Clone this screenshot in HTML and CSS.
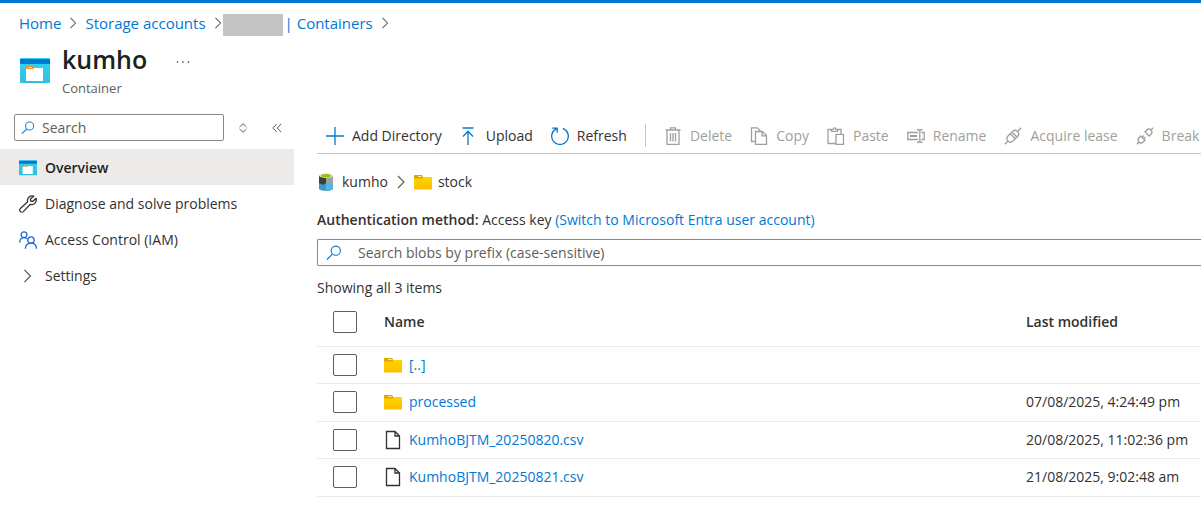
FILE: index.html
```
<!DOCTYPE html>
<html lang="en">
<head>
  <meta charset="UTF-8" />
  <meta name="viewport" content="width=device-width, initial-scale=1" />
  <title>kumho - Container</title>
  <link rel="stylesheet" href="styles.css">
</head>
<body>
  <!-- shared icons -->
  <svg class="defs" aria-hidden="true">
    <linearGradient id="gContainer" x1="0" y1="0" x2="0" y2="1">
      <stop offset="0" stop-color="#32d4f5" /><stop offset="1" stop-color="#32bedd" />
    </linearGradient>
    <linearGradient id="gFolder" x1="0" y1="0" x2="0" y2="1">
      <stop offset="0" stop-color="#ffd400" /><stop offset="1" stop-color="#ffbd00" />
    </linearGradient>
    <symbol id="container" viewBox="0 0 30 26">
      <rect width="30" height="25" rx="1" fill="url(#gContainer)" />
      <path d="M0 6V2a1 1 0 0 1 1-1h28a1 1 0 0 1 1 1v4z" fill="#0078d4" />
      <path d="M6 10h17v13H6z" fill="#fff" />
      <rect x="6" y="8" width="8" height="3" rx="1" fill="#f78d1e" />
      <path d="M8.500 9.500h3.500" stroke="#ffd9a8" />
    </symbol>
    <symbol id="folder" viewBox="0 0 18 16">
      <path d="M0 1.500Q0 1 .5 1H8l1 1.500V5H0z" fill="#dfa500" />
      <path d="M4 2.500h3.500" stroke="#ffe9a6" />
      <path d="M0 4.500h8.500L9.500 3H18v12.500H0z" fill="url(#gFolder)" />
    </symbol>
    <symbol id="file" viewBox="0 0 18 20">
      <path d="M2.500 1.500h8.500l4.500 4.500v12.500h-13zM11 1.500V6h4.500" fill="none" stroke="#323130" stroke-width="1.300" />
    </symbol>
    <symbol id="search" viewBox="0 0 16 16">
      <path d="M1 14.500 6.300 9.200" fill="none" stroke="#0078d4" stroke-width="1.200" />
      <circle cx="9.800" cy="5.700" r="4.600" fill="none" stroke="#0078d4" stroke-width="1.100" />
    </symbol>
    <symbol id="chevron" viewBox="0 0 8 14">
      <path d="M1 1l6 6-6 6" fill="none" stroke="currentColor" stroke-width="1.200" />
    </symbol>
  </svg>

  <header class="page-header">
    <nav class="crumbs" aria-label="Breadcrumb">
      <a href="#">Home</a>
      <svg class="chev"><use href="#chevron" /></svg>
      <a href="#">Storage accounts</a>
      <svg class="chev"><use href="#chevron" /></svg>
      <span class="redacted"></span>
      <a href="#" class="last">| Containers</a>
      <svg class="chev"><use href="#chevron" /></svg>
    </nav>
    <div class="title">
      <svg class="title-icon"><use href="#container" /></svg>
      <div>
        <div class="title-line">
          <h1>kumho</h1>
          <button type="button" class="more" aria-label="More">
            <svg width="14" height="4" viewBox="0 0 14 4" fill="#323130"><circle cx="1.500" cy="2" r=".8" /><circle cx="7" cy="2" r=".8" /><circle cx="12.500" cy="2" r=".8" /></svg>
          </button>
        </div>
        <p>Container</p>
      </div>
    </div>
  </header>

  <div class="layout">
    <aside class="sidebar">
      <div class="side-tools">
        <label class="box side-search">
          <svg width="14" height="14"><use href="#search" /></svg>
          <input type="text" placeholder="Search" aria-label="Search menu" />
        </label>
        <button type="button" aria-label="Expand all">
          <svg width="8" height="10" viewBox="0 0 8 10"><path d="M.5 4 4 .7 7.500 4M.5 6 4 9.300 7.500 6" fill="none" stroke="#605e5c" /></svg>
        </button>
        <button type="button" aria-label="Collapse menu">
          <svg width="10" height="10" viewBox="0 0 10 10"><path d="M4.800.8.800 5l4 4.200M9.200.8 5.200 5l4 4.200" fill="none" stroke="#605e5c" /></svg>
        </button>
      </div>
      <nav class="menu">
        <a href="#" class="active"><svg><use href="#container" /></svg>Overview</a>
        <a href="#">
          <svg viewBox="0 0 18 18" fill="none" stroke="#323130" stroke-width="1.300"><path d="M14.800 1.200a4.600 4.600 0 0 0-6.100 5.600L1.300 13.600a2 2 0 0 0 3 3l7-7.300a4.600 4.600 0 0 0 5.700-6l-3 3-2.300-.3-.3-2.100z" stroke-linejoin="round" /></svg>
          Diagnose and solve problems
        </a>
        <a href="#">
          <svg viewBox="0 0 18 18" fill="none" stroke="#1a66d6" stroke-width="1.300"><circle cx="5" cy="3.700" r="2.900" /><path d="M.7 11.500c0-3 1.800-4.900 4.300-4.900 1.300 0 2.300.4 3.100 1.100" /><circle cx="12" cy="9" r="3.200" /><path d="M6.300 17.800c.2-3.500 2.500-5.600 5.700-5.600s5.300 2.100 5.500 5.600" /></svg>
          Access Control (IAM)
        </a>
        <a href="#"><svg class="menu-chev" viewBox="0 0 18 18" fill="none" stroke="#605e5c" stroke-width="1.200"><path d="M5.500 3l6 6-6 6" /></svg>Settings</a>
      </nav>
    </aside>

    <main>
      <div class="toolbar">
        <button type="button"><svg class="blue" viewBox="0 0 18 18"><path d="M9 0v18M0 9h18" /></svg>Add Directory</button>
        <button type="button"><svg class="blue" viewBox="0 0 18 18"><path d="M2.500 1h11M8 18V4M3 9.500l5-5.200 5 5.200" /></svg>Upload</button>
        <button type="button"><svg class="blue" viewBox="0 0 18 18"><path d="M6.200 1.300a8.300 8.300 0 1 0 5.600 0M1.200 1.200h5v4.600" /></svg>Refresh</button>
        <span class="sep"></span>
        <button type="button" disabled><svg viewBox="0 0 18 18"><path d="M1.500 3h15M6.500 3V.8h5V3M3 3v14.300h12V3M6.500 6v8.500M9 6v8.500M11.500 6v8.500" /></svg>Delete</button>
        <button type="button" disabled><svg viewBox="0 0 18 18"><path d="M5 14.500H1.500V.8h5.800l3 3M5.500 4.500h6.800l4.200 4v8.800h-11zM12 4.500v4.300h4.500" /></svg>Copy</button>
        <button type="button" disabled><svg viewBox="0 0 18 18"><path d="M9 16.500H1V2.500h3.500M10.500 2.500H14V7M4.500 4.300v-2h1.800c0-2 2.500-2 2.500 0h1.700v2zM9 7.300h7.500v10H9z" /></svg>Paste</button>
        <button type="button" disabled><svg viewBox="0 0 18 18"><path d="M11 12.500H.8v-7H11M14.500 5.500h2.700v7h-2.700M10 2.500c2 0 2.800.6 2.800 2v9c0 1.400-.8 2-2.800 2M15.500 2.500c-2 0-2.700.6-2.700 2v9c0 1.400.7 2 2.700 2" /><path d="M3 9h7" stroke-width="2" /></svg>Rename</button>
        <button type="button" disabled><svg viewBox="0 0 18 18"><path d="M.8 17.200 4 14M14 4 17.200.8M4 14a3.600 3.600 0 0 1 0-5l5-5a3.600 3.600 0 0 1 5 5l-5 5a3.600 3.600 0 0 1-5 0zM6.300 6.700l5 5M8 5l5 5" /></svg>Acquire lease</button>
        <button type="button" disabled><svg viewBox="0 0 18 18"><path d="M.8 17.200 3 15M15 3 17.200.8M3 15a3 3 0 0 1 0-4.200L4.800 9 9 13.200 7.200 15A3 3 0 0 1 3 15zM15 3a3 3 0 0 1 0 4.200L13.200 9 9 4.800 10.800 3A3 3 0 0 1 15 3zM6.200 10.300 8 8.500M7.700 11.800l1.800-1.800" /></svg>Break</button>
      </div>

      <nav class="path" aria-label="Path">
        <svg class="cyl" width="14" height="18" viewBox="0 0 14 18">
          <path d="M0 2.500h14v13c0 1.400-3 2.300-7 2.300s-7-.9-7-2.300z" fill="#3c99c9" />
          <path d="M7 2.500h7v13c0 1.400-3 2.300-7 2.300z" fill="#59b4d9" />
          <path d="M0 2.500h7v7.800l-3 1.500-4-1.500z" fill="#3e3e3e" />
          <path d="M7 2.500h7V11l-4-2-3 1.300z" fill="#a0a1a2" />
          <ellipse cx="7" cy="2.600" rx="7" ry="2.400" fill="#e5e5e5" />
          <ellipse cx="7" cy="2.700" rx="5" ry="1.700" fill="#8cc800" />
        </svg>
        <span>kumho</span>
        <svg class="chev"><use href="#chevron" /></svg>
        <svg class="ico"><use href="#folder" /></svg>
        <span>stock</span>
      </nav>

      <p class="auth"><b>Authentication method:</b> Access key <a href="#">(Switch to Microsoft Entra user account)</a></p>

      <label class="box blob-search">
        <svg width="16" height="16"><use href="#search" /></svg>
        <input type="text" placeholder="Search blobs by prefix (case-sensitive)" aria-label="Search blobs by prefix" />
      </label>

      <p class="count">Showing all 3 items</p>

      <table>
        <thead>
          <tr>
            <th class="check"><input type="checkbox" aria-label="Select all" /></th>
            <th>Name</th>
            <th class="date">Last modified</th>
          </tr>
        </thead>
        <tbody>
          <tr>
            <td><input type="checkbox" aria-label="Select parent folder" /></td>
            <td><a href="#"><svg class="ico"><use href="#folder" /></svg>[..]</a></td>
            <td></td>
          </tr>
          <tr>
            <td><input type="checkbox" aria-label="Select processed" /></td>
            <td><a href="#"><svg class="ico"><use href="#folder" /></svg>processed</a></td>
            <td>07/08/2025, 4:24:49 pm</td>
          </tr>
          <tr>
            <td><input type="checkbox" aria-label="Select KumhoBJTM_20250820.csv" /></td>
            <td><a href="#"><svg class="ico file"><use href="#file" /></svg>KumhoBJTM_20250820.csv</a></td>
            <td>20/08/2025, 11:02:36 pm</td>
          </tr>
          <tr>
            <td><input type="checkbox" aria-label="Select KumhoBJTM_20250821.csv" /></td>
            <td><a href="#"><svg class="ico file"><use href="#file" /></svg>KumhoBJTM_20250821.csv</a></td>
            <td>21/08/2025, 9:02:48 am</td>
          </tr>
        </tbody>
      </table>
    </main>
  </div>
</body>
</html>
```
FILE: styles.css
```
* {
  box-sizing: border-box;
}
body {
  margin: 0;
  border-top: 3px solid #0078d4;
  background-color: #fff;
  color: #323130;
  font-family: "Segoe UI", "Open Sans", sans-serif;
  font-size: 14px;
  line-height: 20px;
}
svg {
  flex-shrink: 0;
}
.defs {
  position: absolute;
  width: 0;
  height: 0;
}
h1, p {
  margin: 0;
}
a {
  color: #0078d4;
  text-decoration: none;
}
a:hover {
  text-decoration: underline;
}
button {
  padding: 0;
  border: none;
  background: none;
  color: inherit;
  font: inherit;
  cursor: pointer;
}
.chev {
  width: 8px;
  height: 14px;
  color: #605e5c;
}

/* header */
.crumbs {
  display: flex;
  align-items: center;
  gap: 8px;
  height: 40px;
  padding-left: 19px;
  font-size: 15px;
}
.crumbs .chev {
  height: 12px;
}
.redacted {
  width: 60px;
  height: 22px;
  margin: 4px 0 0 -7px;
  background-color: #c3c3c3;
}
.crumbs .last {
  margin-left: -6px;
  word-spacing: normal;
}
.title {
  display: flex;
  gap: 12px;
  padding: 2px 0 0 20px;
}
.title-icon {
  width: 30px;
  height: 26px;
  margin-top: 13px;
}
.title-line {
  display: flex;
  align-items: center;
  gap: 29px;
  height: 33px;
}
h1 {
  padding-bottom: 4px;
  color: #201f1e;
  font-size: 25px;
  font-weight: 600;
  line-height: 29px;
}
.more svg {
  display: block;
}
.title p {
  color: #605e5c;
  font-size: 13px;
}

/* sidebar */
.layout {
  display: flex;
  margin-top: 16px;
}
.sidebar {
  flex: 0 0 294px;
}
.side-tools {
  display: flex;
  align-items: center;
  gap: 15px;
  padding-left: 14px;
}
.side-tools button {
  width: 8px;
}
.side-tools button + button {
  width: 10px;
  margin-left: 10px;
}
.side-tools button svg {
  display: block;
}
.box {
  display: flex;
  align-items: center;
  border: 1px solid #8a8886;
  border-radius: 2px;
  height: 27px;
}
.box input {
  flex: 1;
  min-width: 0;
  padding: 0;
  border: none;
  outline: none;
  background: none;
  color: inherit;
  font: inherit;
}
.box input::placeholder {
  color: #605e5c;
  opacity: 1;
}
.side-search {
  width: 210px;
  padding-left: 6px;
  gap: 7px;
}
.menu {
  margin-top: 8px;
}
.menu a {
  display: flex;
  align-items: center;
  gap: 8px;
  height: 36px;
  padding: 1px 0 0 19px;
  color: #323130;
}
.menu svg {
  width: 18px;
  height: 18px;
}
.menu .active {
  background-color: #edebe9;
  color: #201f1e;
  font-weight: 600;
}

/* blob list */
main {
  flex: 1;
  min-width: 0;
  padding-left: 23px;
  overflow: hidden;
}
.toolbar {
  display: flex;
  align-items: center;
  gap: 18px;
  height: 40px;
  padding: 4px 0 0 9px;
  border-bottom: 1px solid #c8c6c4;
  white-space: nowrap;
}
.toolbar button {
  display: flex;
  flex-shrink: 0;
  align-items: center;
  gap: 8px;
}
.toolbar button:disabled {
  color: #a19f9d;
  cursor: default;
}
.toolbar svg {
  width: 18px;
  height: 18px;
  fill: none;
  stroke: #a19f9d;
  stroke-width: 1.3;
}
.toolbar .blue {
  stroke: #0078d4;
}
.sep {
  flex-shrink: 0;
  width: 1px;
  height: 23px;
  background-color: #c8c6c4;
}
.path {
  display: flex;
  align-items: center;
  height: 56px;
  padding-left: 2px;
  gap: 9px;
}
.ico {
  width: 18px;
  height: 16px;
}
.path .ico + span {
  margin-left: -3px;
}
.auth {
  white-space: nowrap;
}
.auth b {
  font-weight: 600;
}
.blob-search {
  margin-top: 9px;
  padding-left: 8px;
  gap: 16px;
  border-right: none;
  border-radius: 2px 0 0 2px;
}
.count {
  margin-top: 12px;
}
table {
  width: 100%;
  border-collapse: collapse;
  table-layout: fixed;
}
th, td {
  height: 37px;
  padding: 0;
  border-bottom: 1px solid #edebe9;
  text-align: left;
  white-space: nowrap;
}
th {
  height: 48px;
  font-weight: 600;
}
tbody tr:nth-child(even) td {
  height: 38px;
}
.check {
  width: 67px;
}
.date {
  width: 175px;
}
td a {
  display: flex;
  align-items: center;
  gap: 7px;
}
.file {
  height: 20px;
}
input[type='checkbox'] {
  display: block;
  appearance: none;
  width: 24px;
  height: 22px;
  margin: 0 0 0 16px;
  border: 1px solid #605e5c;
  border-radius: 2px;
  background-color: #fff;
}
input[type='checkbox']:checked {
  background-color: #0078d4;
}
```
